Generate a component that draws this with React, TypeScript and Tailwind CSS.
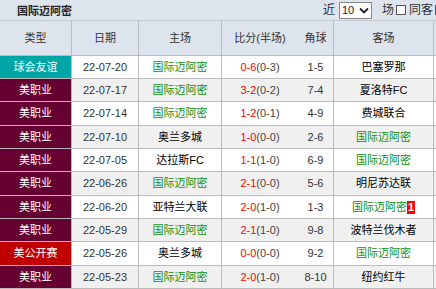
import React from "react";

type Row = {
  type: string;
  typeBg: string;
  date: string;
  home: string;
  homeGreen: boolean;
  ft: string;
  ht: string;
  corner: string;
  away: string;
  awayGreen: boolean;
  badge?: string;
  h: string;
};

const rows: Row[] = [
  { type: "球会友谊", typeBg: "bg-[#00a6a6]", date: "22-07-20", home: "国际迈阿密", homeGreen: true, ft: "0-6", ht: "(0-3)", corner: "1-5", away: "巴塞罗那", awayGreen: false, h: "h-[23px]" },
  { type: "美职业", typeBg: "bg-[#660033]", date: "22-07-17", home: "国际迈阿密", homeGreen: true, ft: "3-2", ht: "(0-2)", corner: "7-4", away: "夏洛特FC", awayGreen: false, h: "h-[23px]" },
  { type: "美职业", typeBg: "bg-[#660033]", date: "22-07-14", home: "国际迈阿密", homeGreen: true, ft: "1-2", ht: "(0-1)", corner: "4-9", away: "费城联合", awayGreen: false, h: "h-[24px]" },
  { type: "美职业", typeBg: "bg-[#660033]", date: "22-07-10", home: "奥兰多城", homeGreen: false, ft: "1-0", ht: "(0-0)", corner: "2-6", away: "国际迈阿密", awayGreen: true, h: "h-[23px]" },
  { type: "美职业", typeBg: "bg-[#660033]", date: "22-07-05", home: "达拉斯FC", homeGreen: false, ft: "1-1", ht: "(1-0)", corner: "6-9", away: "国际迈阿密", awayGreen: true, h: "h-[23px]" },
  { type: "美职业", typeBg: "bg-[#660033]", date: "22-06-26", home: "国际迈阿密", homeGreen: true, ft: "2-1", ht: "(0-0)", corner: "5-6", away: "明尼苏达联", awayGreen: false, h: "h-[24px]" },
  { type: "美职业", typeBg: "bg-[#660033]", date: "22-06-20", home: "亚特兰大联", homeGreen: false, ft: "2-0", ht: "(1-0)", corner: "1-3", away: "国际迈阿密", awayGreen: true, badge: "1", h: "h-[23px]" },
  { type: "美职业", typeBg: "bg-[#660033]", date: "22-05-29", home: "国际迈阿密", homeGreen: true, ft: "2-1", ht: "(1-0)", corner: "9-8", away: "波特兰伐木者", awayGreen: false, h: "h-[23px]" },
  { type: "美公开赛", typeBg: "bg-[#c00000]", date: "22-05-26", home: "奥兰多城", homeGreen: false, ft: "0-0", ht: "(0-0)", corner: "9-2", away: "国际迈阿密", awayGreen: true, h: "h-[24px]" },
  { type: "美职业", typeBg: "bg-[#660033]", date: "22-05-23", home: "国际迈阿密", homeGreen: true, ft: "2-0", ht: "(1-0)", corner: "8-10", away: "纽约红牛", awayGreen: false, h: "h-[23px]" },
];

const cols = "grid grid-cols-[72px_67px_83px_76px_36px_100px_1fr]";

export default function App() {
  return (
    <div
      className="w-[436px] h-[289px] overflow-hidden bg-white text-[11px] text-[#333]"
      style={{ fontFamily: '"Liberation Sans", "Noto Sans CJK SC", sans-serif' }}
    >
      {/* title bar */}
      <div className="h-[21px] bg-[#dde4ee] border-b border-[#c4c8cc] flex items-center justify-between pl-[17px] overflow-hidden">
        <span className="font-bold text-[11px] text-[#222] mt-[2px]">国际迈阿密</span>
        <div className="flex items-center h-full shrink-0 mr-[-9px]">
          <span className="text-[12px] text-[#333] mr-[4px]">近</span>
          <div className="h-[17px] w-[33px] bg-white border border-[#888] flex items-center justify-between pl-[2px] pr-[2px] mt-[1px]">
            <span className="text-[11px] text-[#222]">10</span>
            <svg width="10" height="7" viewBox="0 0 10 7">
              <path d="M1 1.5 L5 5.5 L9 1.5" fill="none" stroke="#222" strokeWidth="1.8" />
            </svg>
          </div>
          <span className="text-[12px] text-[#333] ml-[10px]">场</span>
          <div className="w-[10px] h-[10px] border border-[#555] bg-white ml-[2px]" />
          <span className="text-[12px] text-[#333] ml-[3px]">同客</span>
          <div className="w-[10px] h-[10px] border border-[#555] bg-white ml-[2px] flex items-center justify-center">
            <svg width="8" height="8" viewBox="0 0 8 8">
              <path d="M1 4 L3 6 L7 1.5" fill="none" stroke="#222" strokeWidth="1.5" />
            </svg>
          </div>
        </div>
      </div>

      {/* header */}
      <div className={`${cols} h-[35px] bg-[#dde4ee] border-b border-[#bbb]`}>
        <div className="border-r border-[#bbb] flex items-center justify-center">类型</div>
        <div className="border-r border-[#bbb] flex items-center justify-center">日期</div>
        <div className="border-r border-[#bbb] flex items-center justify-center">主场</div>
        <div className="flex items-center justify-center">比分(半场)</div>
        <div className="border-r border-[#bbb] flex items-center justify-center">角球</div>
        <div className="border-r border-[#bbb] flex items-center justify-center">客场</div>
        <div />
      </div>

      {rows.map((r, i) => (
        <div
          key={i}
          className={`${cols} ${r.h} border-b border-[#bbb] ${i % 2 === 0 ? "bg-white" : "bg-[#f0f0f0]"}`}
        >
          <div className={`${r.typeBg} text-white border-r border-[#bbb] flex items-center justify-center`}>
            {r.type}
          </div>
          <div className="border-r border-[#bbb] flex items-center justify-center text-[#333]">{r.date}</div>
          <div
            className={`border-r border-[#bbb] flex items-center justify-center ${r.homeGreen ? "text-[#109010]" : "text-black"}`}
          >
            {r.home}
          </div>
          <div className="flex items-center justify-center">
            <span className="text-[#ff0000]">{r.ft}</span>
            <span className="text-[#444]">{r.ht}</span>
          </div>
          <div className="border-r border-[#bbb] flex items-center justify-center text-[#333]">{r.corner}</div>
          <div
            className={`border-r border-[#bbb] flex items-center justify-center ${r.awayGreen ? "text-[#109010]" : "text-black"}`}
          >
            {r.away}
            {r.badge && (
              <span className="bg-[#ff0000] text-white font-bold text-[11px] leading-[13px] px-[1px]">{r.badge}</span>
            )}
          </div>
          <div />
        </div>
      ))}
    </div>
  );
}
